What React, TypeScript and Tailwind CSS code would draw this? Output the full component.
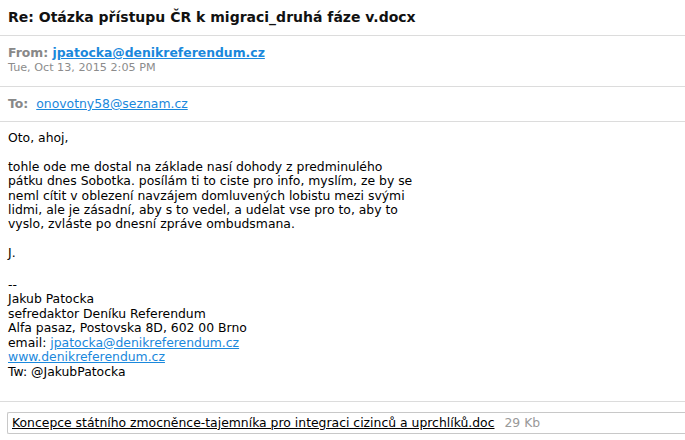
import React from 'react';

const font = { fontFamily: '"DejaVu Sans", Verdana, sans-serif' };

export default function App() {
  return (
    <div className="w-[685px] h-[440px] overflow-hidden bg-white text-black" style={font}>
      <h1 className="h-[35px] px-2 pt-[7px] text-[14px] font-bold leading-[20px] text-[#111]">
        Re: Otázka přístupu ČR k migraci_druhá fáze v.docx
      </h1>
      <div className="border-t border-[#dcdcdc] px-2 pt-[8px] h-[51px]">
        <div className="text-[12.4px] leading-[17px] font-bold text-[#888]">
          From:{' '}
          <a href="#" className="text-[#1a88dc] underline">jpatocka@denikreferendum.cz</a>
        </div>
        <div className="text-[11.2px] leading-[14px] text-[#8c8c8c]">Tue, Oct 13, 2015 2:05 PM</div>
      </div>
      <div className="border-t border-[#dcdcdc] px-2 pt-[8px] h-[35px] text-[12.4px] leading-[18px]">
        <span className="font-bold text-[#888]">To:</span>{' '}
        <a href="#" className="ml-1 text-[#1a88dc] underline">onovotny58@seznam.cz</a>
      </div>
      <div className="border-t border-[#dcdcdc] h-[280px] px-2 pt-[9px] text-[12.4px] leading-[14.4px]">
        <p>Oto, ahoj,</p>
        <br />
        <p>
          tohle ode me dostal na základe nasí dohody z predminulého<br />
          pátku dnes Sobotka. posílám ti to ciste pro info, myslím, ze by se<br />
          neml cítit v oblezení navzájem domluvených lobistu mezi svými<br />
          lidmi, ale je zásadní, aby s to vedel, a udelat vse pro to, aby to<br />
          vyslo, zvláste po dnesní zpráve ombudsmana.
        </p>
        <br />
        <p>J.</p>
        <br />
        <p className="mt-[3px]">
          --<br />
          Jakub Patocka<br />
          sefredaktor Deníku Referendum<br />
          Alfa pasaz, Postovska 8D, 602 00 Brno<br />
          email: <a href="#" className="text-[#1a88dc] underline">jpatocka@denikreferendum.cz</a><br />
          <a href="#" className="text-[#1a88dc] underline">www.denikreferendum.cz</a><br />
          Tw: @JakubPatocka
        </p>
      </div>
      <div className="border-t border-[#dcdcdc] pl-[7px] pt-[10px]">
        <div className="flex items-center h-[22px] border border-[#c8c8c8] rounded-l-[2px] border-r-0 pl-1 text-[12.4px]">
          <a href="#" className="text-black underline">Koncepce státního zmocněnce-tajemníka pro integraci cizinců a uprchlíků.doc</a>
          <span className="ml-[10px] text-[#999]">29 Kb</span>
        </div>
      </div>
    </div>
  );
}
